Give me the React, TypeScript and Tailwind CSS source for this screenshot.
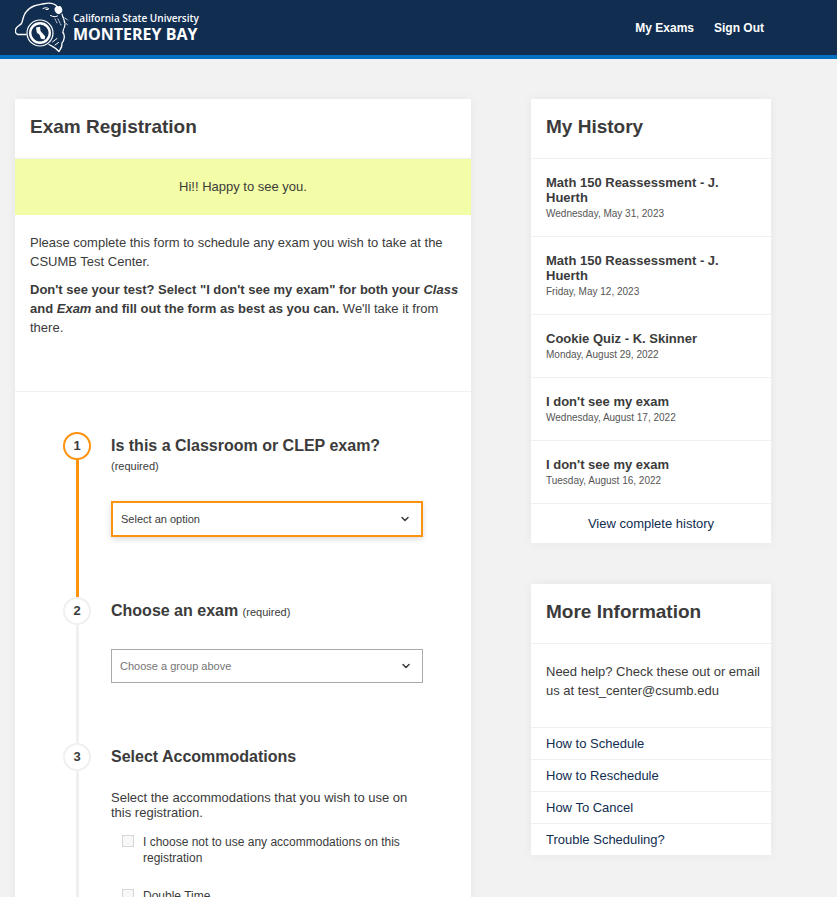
import { ChevronDown } from "lucide-react";
import type { ReactNode } from "react";

const history = [
  { title: "Math 150 Reassessment - J. Huerth", date: "Wednesday, May 31, 2023" },
  { title: "Math 150 Reassessment - J. Huerth", date: "Friday, May 12, 2023" },
  { title: "Cookie Quiz - K. Skinner", date: "Monday, August 29, 2022" },
  { title: "I don't see my exam", date: "Wednesday, August 17, 2022" },
  { title: "I don't see my exam", date: "Tuesday, August 16, 2022" },
];

const helpLinks = ["How to Schedule", "How to Reschedule", "How To Cancel", "Trouble Scheduling?"];

const accommodations = ["I choose not to use any accommodations on this registration", "Double Time"];

function Logo() {
  return (
    <a href="#home" aria-label="California State University Monterey Bay" className="flex items-center gap-1">
      <svg width="54" height="55" viewBox="0 0 54 55" fill="none" stroke="#fff" strokeLinecap="round" strokeLinejoin="round">
        <path strokeWidth="1.4" d="M11 34.5H3C0 33.500 0 31 1 28.500C2 26 5 25.500 6.500 23.500C8 21 7.500 17.500 10 13.500C12 10.500 15 7.500 19 6C23 4.500 26 4.500 29 3.700C34 2.700 39 2.700 42 6.500" />
        <path strokeWidth="1" d="M28 8.500C30 7.500 32 7.500 33.500 8.500M31 9.500h2M35.500 15.500C38 16.500 40 17.500 42.500 16" />
        <path strokeWidth="1.2" strokeDasharray="4 1.2" d="M47 14C48 19 51 22 49.500 27C48 30 48 32 47.500 34" />
        <path strokeWidth="0.8" strokeDasharray="1.5 1.3" d="M48 17l5 3M49 22l4 3M43 19l3 6M40 19l2 4" />
        <path fill="#fff" stroke="none" d="M39.500 9c0-2.500 2.500-2 3.500-2.500 1-1 3-.8 3.300.8 1 1.200 1.500 3.500.5 5l-2.800 2c-2.500-.3-4.500-2.500-4.500-5.300z" />
        <circle cx="25" cy="33" r="13" strokeWidth="1.200" />
        <circle cx="25" cy="33" r="9.800" strokeWidth="2.400" />
        <path fill="#fff" stroke="none" d="M21 27.500l4-.8.5 4.300 4.800 5.500-.8 3-3.500-.8-1.500-4-2.700-2.200z" />
        <path strokeWidth="1.300" d="M34 44.500C38 47 41 47.500 44 51.500C46 48.500 47.500 47 47 43C49.500 40 50 37 48.500 33" />
        <path strokeWidth="1" d="M37.500 42L42 38.500M40 45L43.500 42.500" />
      </svg>
      <span className="flex flex-col whitespace-nowrap font-['Open_Sans','Noto_Sans',sans-serif] text-white">
        <span className="text-[10px] leading-[13px] font-semibold">California State University</span>
        <span className="text-[16px] leading-[18px] font-bold">MONTEREY BAY</span>
      </span>
    </a>
  );
}

function Card({ title, children }: { title: string; children: ReactNode }) {
  return (
    <section className="bg-white shadow-[0_0_10px_rgba(0,0,0,0.05)]">
      <h2 className="border-b border-[#f0f0f0] px-[15px] pt-4 pb-[19px] text-[19px] leading-6 font-bold">{title}</h2>
      {children}
    </section>
  );
}

function Step({ number, active, children }: { number: number; active?: boolean; children: ReactNode }) {
  return (
    <li className="flex gap-5">
      <div className="flex w-7 shrink-0 flex-col items-center">
        <span
          className={`flex size-7 items-center justify-center rounded-full border-2 text-[13px] font-bold ${active ? "border-[#fc920d]" : "border-[#f0f0f0]"}`}
        >
          {number}
        </span>
        <span className={`w-[3px] grow ${active ? "bg-[#fc920d]" : "bg-[#f0f0f0]"}`} />
      </div>
      <div className="min-w-0 grow pt-1 pb-[60px]">{children}</div>
    </li>
  );
}

function Required() {
  return <span className="text-[11px] font-normal">(required)</span>;
}

export default function App() {
  return (
    <div className="min-h-screen bg-[#f2f2f2] font-['Liberation_Sans',Arial,sans-serif] text-[13px] text-[#3b3b3b]">
      <header className="flex h-[59px] items-center justify-between border-b-4 border-[#0071c1] bg-[#112e51] pr-[73px] pl-[15px]">
        <Logo />
        <nav className="flex gap-5 text-[12px] font-bold text-white">
          <a href="#exams">My Exams</a>
          <a href="#signout">Sign Out</a>
        </nav>
      </header>

      <div className="flex items-start gap-[60px] pt-10 pr-[66px] pl-[15px]">
        <main className="min-w-0 grow">
          <Card title="Exam Registration">
            <p className="bg-[#f3fda8] py-[18px] text-center leading-5">Hi!! Happy to see you.</p>
            <div className="flex flex-col gap-[9px] border-b border-[#f0f0f0] pt-[18px] pr-2 pb-[54px] pl-[15px] leading-[19px]">
              <p>Please complete this form to schedule any exam you wish to take at the CSUMB Test Center.</p>
              <p>
                <strong>
                  Don't see your test? Select "I don't see my exam" for both your <em>Class</em> and <em>Exam</em> and
                  fill out the form as best as you can.
                </strong>{" "}
                We'll take it from there.
              </p>
            </div>
            <form>
              <ol className="pt-10 pr-12 pl-12">
                <Step number={1} active>
                  <label htmlFor="exam-type" className="block text-[16px] leading-[19px] font-bold">
                    Is this a Classroom or CLEP exam? <Required />
                  </label>
                  <div className="relative mt-[25px]">
                    <select
                      id="exam-type"
                      className="block h-9 w-full appearance-none border-2 border-[#fc920d] bg-white px-2 text-[11px] shadow-[0_2px_6px_rgba(0,0,0,0.15)]"
                    >
                      <option>Select an option</option>
                    </select>
                    <ChevronDown className="pointer-events-none absolute top-3 right-3 size-3" strokeWidth={3} />
                  </div>
                </Step>
                <Step number={2}>
                  <label htmlFor="exam" className="block text-[16px] leading-[19px] font-bold">
                    Choose an exam <Required />
                  </label>
                  <div className="relative mt-[27px]">
                    <select
                      id="exam"
                      disabled
                      className="block h-[34px] w-full appearance-none border border-[#a9a9a9] bg-white px-2 text-[11px] text-[#757575] opacity-100"
                    >
                      <option>Choose a group above</option>
                    </select>
                    <ChevronDown className="pointer-events-none absolute top-[11px] right-[11px] size-3" strokeWidth={3} />
                  </div>
                </Step>
                <Step number={3}>
                  <fieldset>
                    <legend className="text-[16px] leading-[19px] font-bold">Select Accommodations</legend>
                    <p className="mt-6 leading-[15px]">
                      Select the accommodations that you wish to use on this registration.
                    </p>
                    <div className="mt-[14px] flex flex-col gap-[22px] pl-[11px] text-[12px]">
                      {accommodations.map((name) => (
                        <label key={name} className="flex items-start gap-[9px] leading-4">
                          <input
                            type="checkbox"
                            disabled
                            className="mt-px size-3 shrink-0 appearance-none border border-[#d6d6d6] bg-[#f8f8f8]"
                          />
                          {name}
                        </label>
                      ))}
                    </div>
                  </fieldset>
                </Step>
              </ol>
            </form>
          </Card>
        </main>

        <aside className="flex w-60 shrink-0 flex-col gap-[41px]">
          <Card title="My History">
            <ul>
              {history.map((item) => (
                <li key={item.date} className="border-b border-[#f0f0f0] px-[15px] pt-4 pb-[15px]">
                  <h3 className="leading-[15px] font-bold">{item.title}</h3>
                  <p className="pt-px text-[10px] leading-[15px] text-[#555]">{item.date}</p>
                </li>
              ))}
            </ul>
            <a href="#history" className="block py-[10px] text-center leading-[19px] text-[#112e51]">
              View complete history
            </a>
          </Card>
          <Card title="More Information">
            <p className="pt-[18px] pr-2 pb-[27px] pl-[15px] leading-[19px]">
              Need help? Check these out or email us at test_center@csumb.edu
            </p>
            <ul>
              {helpLinks.map((name) => (
                <li key={name} className="border-t border-[#f0f0f0]">
                  <a href="#help" className="block px-[15px] py-[6px] leading-[19px] text-[#112e51]">
                    {name}
                  </a>
                </li>
              ))}
            </ul>
          </Card>
        </aside>
      </div>
    </div>
  );
}
